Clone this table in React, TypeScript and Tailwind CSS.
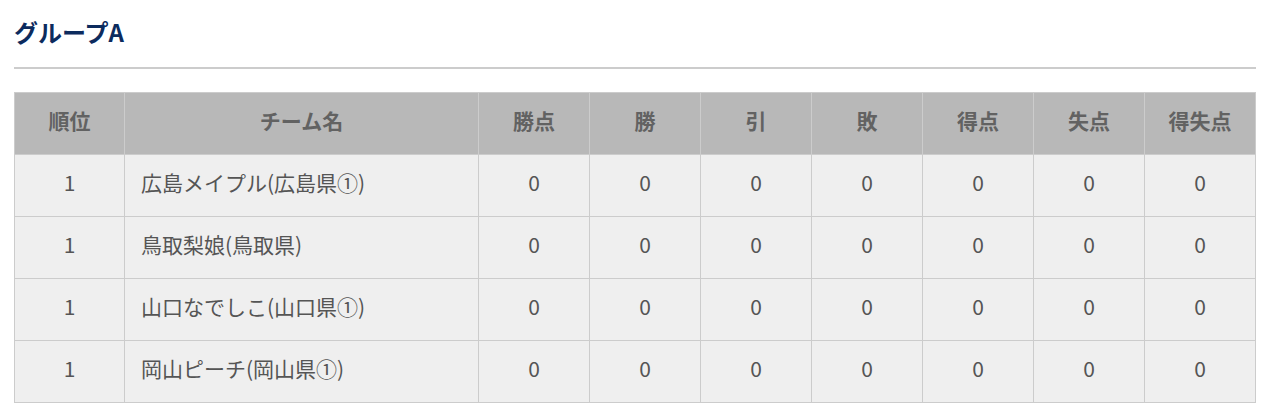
import React from "react";

const headers = ["順位", "チーム名", "勝点", "勝", "引", "敗", "得点", "失点", "得失点"];

const teams = [
  "広島メイプル(広島県①)",
  "鳥取梨娘(鳥取県)",
  "山口なでしこ(山口県①)",
  "岡山ピーチ(岡山県①)",
];

const App: React.FC = () => {
  return (
    <div
      className="bg-white pl-[14px] pr-[24px] pt-[15px] pb-4 w-[1280px]"
      style={{ fontFamily: '"Noto Sans CJK JP", "Noto Sans", sans-serif' }}
    >
      {/* Title */}
      <h2 className="text-[24px] font-bold text-[#0c2b5e] leading-[34px]">グループA</h2>
      <div className="mt-[18px] h-[2px] bg-[#cccccc]" />

      {/* Standings table */}
      <table className="mt-[23px] w-[1242px] border-collapse table-fixed text-[21px]">
        <colgroup>
          <col className="w-[110px]" />
          <col className="w-[354px]" />
          <col />
          <col />
          <col />
          <col />
          <col />
          <col />
          <col />
        </colgroup>
        <thead>
          <tr className="bg-[#b8b8b8] h-[62px]">
            {headers.map((h) => (
              <th
                key={h}
                className="border border-[#cccccc] text-center font-bold text-[#626262] pb-[5px]"
              >
                {h}
              </th>
            ))}
          </tr>
        </thead>
        <tbody>
          {teams.map((t) => (
            <tr key={t} className="bg-[#efefef] h-[62px] text-[#555555]">
              <td className="border border-[#cccccc] text-center pb-[5px]">1</td>
              <td className="border border-[#cccccc] text-left pl-[16px] pb-[5px]">{t}</td>
              {[0, 1, 2, 3, 4, 5, 6].map((i) => (
                <td key={i} className="border border-[#cccccc] text-center pb-[5px]">
                  0
                </td>
              ))}
            </tr>
          ))}
        </tbody>
      </table>
    </div>
  );
};

export default App;
